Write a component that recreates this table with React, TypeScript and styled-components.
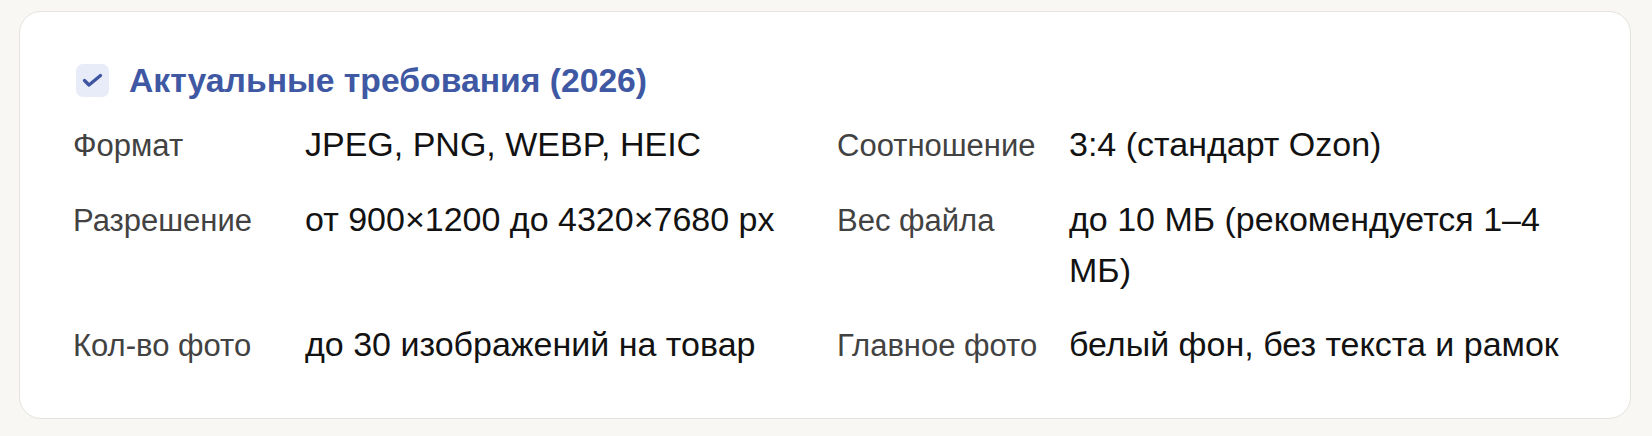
import React from "react";
import styled, { createGlobalStyle } from "styled-components";

const GlobalStyle = createGlobalStyle`
  html, body {
    margin: 0;
    padding: 0;
    background: #f8f7f3;
  }
  body {
    font-family: "Liberation Sans", Arial, Helvetica, sans-serif;
    -webkit-font-smoothing: antialiased;
  }
`;

const Page = styled.div`
  padding: 11px 21px 17px 19px;
`;

const Card = styled.section`
  background: #ffffff;
  border: 1px solid #e5e3de;
  border-radius: 22px;
  padding: 48px 30px 47px 53px;
`;

const Header = styled.div`
  display: flex;
  align-items: center;
  gap: 20px;
  height: 40px;
  margin-bottom: 19px;
`;

const CheckBox = styled.span`
  display: inline-flex;
  align-items: center;
  justify-content: center;
  width: 33px;
  height: 33px;
  margin-left: 3px;
  border-radius: 7px;
  background: #e8ecf8;
  flex: none;
`;

const Title = styled.h2`
  margin: 0;
  font-size: 33.7px;
  line-height: 40px;
  font-weight: 700;
  color: #3f58a3;
  white-space: nowrap;
`;

const Grid = styled.dl`
  margin: 0;
  display: grid;
  grid-template-columns: 200px 500px 200px 510px;
  column-gap: 32px;
  row-gap: 22px;
  align-items: baseline;
`;

const Label = styled.dt`
  margin: 0;
  font-size: 31px;
  line-height: 51.5px;
  color: #424242;
  white-space: nowrap;
`;

const Value = styled.dd`
  margin: 0;
  font-size: 34px;
  line-height: 51.5px;
  color: #121212;
`;

const items: [string, string][] = [
  ["Формат", "JPEG, PNG, WEBP, HEIC"],
  ["Соотношение", "3:4 (стандарт Ozon)"],
  ["Разрешение", "от 900×1200 до 4320×7680 px"],
  ["Вес файла", "до 10 МБ (рекомендуется 1–4 МБ)"],
  ["Кол-во фото", "до 30 изображений на товар"],
  ["Главное фото", "белый фон, без текста и рамок"],
];

const CheckIcon = () => (
  <svg width="33" height="33" viewBox="0 0 33 33" fill="none" aria-hidden="true">
    <polyline
      points="8.5,16.5 13,21 24.5,11.5"
      stroke="#3f55a0"
      strokeWidth="3.3"
      strokeLinecap="round"
      strokeLinejoin="round"
    />
  </svg>
);

export default function App() {
  return (
    <>
      <GlobalStyle />
      <Page>
        <Card>
          <Header>
            <CheckBox>
              <CheckIcon />
            </CheckBox>
            <Title>Актуальные требования (2026)</Title>
          </Header>
          <Grid>
            {items.map(([label, value]) => (
              <React.Fragment key={label}>
                <Label>{label}</Label>
                <Value>{value}</Value>
              </React.Fragment>
            ))}
          </Grid>
        </Card>
      </Page>
    </>
  );
}
